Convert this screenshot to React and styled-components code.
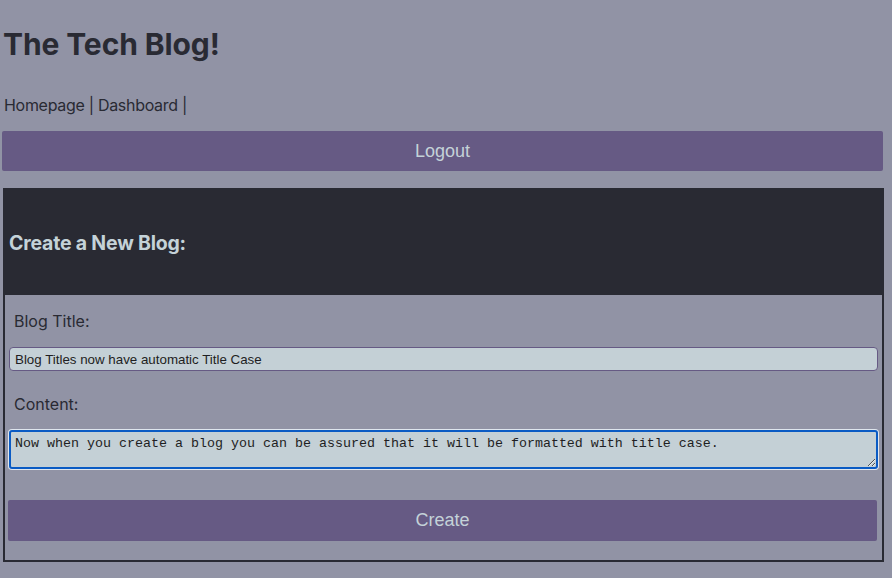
import React from 'react'
import styled, { createGlobalStyle } from 'styled-components'

const GlobalStyle = createGlobalStyle`
	html, body {
		margin: 0;
		padding: 0;
		background: #9193a5;
	}

	body {
		font-family: Inter, "Noto Sans", sans-serif;
		color: #292a33;
	}
`

const Page = styled.div`
	padding: 26px 8px 16px 2px;
	width: 882px;
`

const Title = styled.h1`
	margin: 0 0 0 1px;
	font-size: 30px;
	font-weight: 700;
	line-height: 36px;
	letter-spacing: -0.1px;
`

const Nav = styled.nav`
	margin: 33px 0 0 2px;
	font-size: 16px;
	line-height: 20px;
	letter-spacing: -0.3px;
`

const NavLink = styled.a`
	color: inherit;
	text-decoration: none;
`

const Button = styled.button`
	display: block;
	width: 100%;
	height: ${p => p.$height || 40}px;
	border: none;
	border-radius: 2px;
	background: #665a84;
	color: #c4d2d8;
	font-family: "Liberation Sans", Arial, sans-serif;
	font-size: 18px;
	cursor: pointer;
`

const LogoutRow = styled.div`
	margin: 16px 1px 0 0;
`

const Card = styled.section`
	margin: 17px 0 0 1px;
	border: 2px solid #292a33;
`

const CardHeader = styled.header`
	height: 105px;
	display: flex;
	align-items: center;
	padding-left: 4px;
	background: #292a33;
`

const CardTitle = styled.h3`
	margin: 0;
	font-size: 19.5px;
	font-weight: 700;
	color: #c4d2d8;
	letter-spacing: -0.2px;
`

const Form = styled.form`
	display: flex;
	flex-direction: column;
	padding: 16px 4px 19px 3px;
`

const Label = styled.label`
	display: block;
	margin: ${p => p.$top || 0}px 0 16px 6px;
	font-size: 16px;
	line-height: 20px;
`

const TextInput = styled.input`
	box-sizing: border-box;
	margin-left: 1px;
	height: 24px;
	padding: 1px 5px;
	border: 1px solid #665a84;
	border-radius: 4px;
	background: #c4d0d6;
	color: #1e1e22;
	font-family: "Liberation Sans", Arial, sans-serif;
	font-size: 13.33px;
	outline: none;
`

const TextArea = styled.textarea`
	box-sizing: border-box;
	margin-left: 1px;
	height: 39px;
	padding: 4px 4px 1px;
	border: 2px solid #0a5bc4;
	border-radius: 3px;
	box-shadow: 0 0 0 1px #dfe6ee;
	background: #c4d0d6;
	color: #1e1e22;
	font-family: "Liberation Mono", "Courier New", monospace;
	font-size: 13.33px;
	line-height: 15px;
	outline: none;
`

const CreateRow = styled.div`
	margin: 31px 1px 0 0;
`

export default function App() {
	return (
		<Page>
			<GlobalStyle />
			<Title>The Tech Blog!</Title>
			<Nav>
				<NavLink href="#">Homepage</NavLink> | <NavLink href="#">Dashboard</NavLink> |
			</Nav>
			<LogoutRow>
				<Button type="button">Logout</Button>
			</LogoutRow>
			<Card>
				<CardHeader>
					<CardTitle>Create a New Blog:</CardTitle>
				</CardHeader>
				<Form onSubmit={e => e.preventDefault()}>
					<Label htmlFor="title">Blog Title:</Label>
					<TextInput id="title" defaultValue="Blog Titles now have automatic Title Case" />
					<Label htmlFor="content" $top={23}>Content:</Label>
					<TextArea
						id="content"
						defaultValue="Now when you create a blog you can be assured that it will be formatted with title case."
					/>
					<CreateRow>
						<Button type="submit" $height={41}>Create</Button>
					</CreateRow>
				</Form>
			</Card>
		</Page>
	)
}
